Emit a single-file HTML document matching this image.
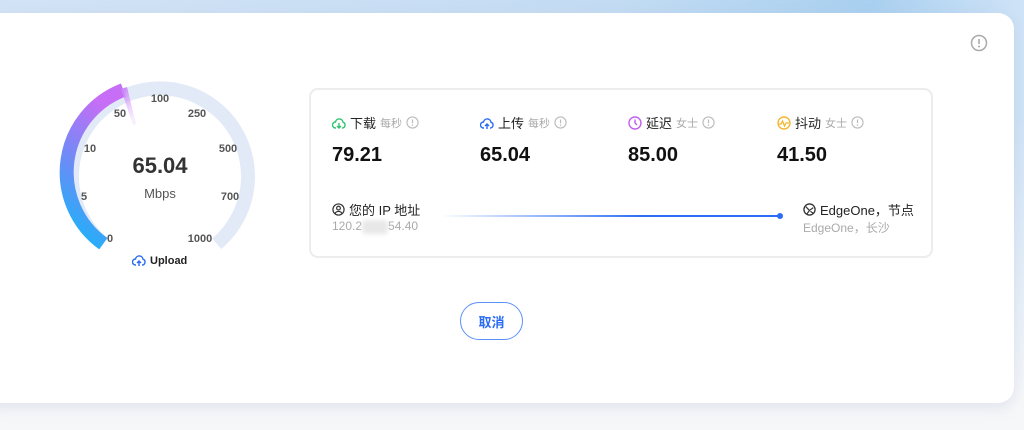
<!DOCTYPE html>
<html><head><meta charset="utf-8"><style>
*{margin:0;padding:0;box-sizing:border-box}
body{width:1024px;height:430px;overflow:hidden;background:#f6f7f9;font-family:"Liberation Sans","Noto Sans CJK SC",sans-serif;position:relative}
.bg{position:absolute;left:0;top:0;width:1024px;height:430px;background:linear-gradient(180deg,rgba(246,247,249,0) 0,rgba(246,247,249,0) 120px,#f6f7f9 400px),linear-gradient(90deg,#d3e3f6 0%,#c3dcf3 60%,#a9d0f0 85%,#cfe3f7 100%)}
.card{position:absolute;left:-20px;top:13px;width:1034px;height:390px;background:#fff;border-radius:16px;box-shadow:0 4px 14px rgba(180,190,215,.35)}
.abs{position:absolute}
.t{position:absolute;font-size:11px;font-weight:bold;color:#555;transform:translate(-50%,-50%)}
.panel{position:absolute;left:309px;top:88px;width:624px;height:170px;border:2px solid #ececee;border-radius:9px}
.lab{position:absolute;font-size:13px;color:#222;display:flex;align-items:center;gap:4px;white-space:nowrap}
.lab .s{font-size:11px;color:#aaa}
.val{position:absolute;font-size:20px;font-weight:bold;color:#111}
.sub{position:absolute;font-size:12px;color:#aaa;white-space:nowrap}
</style></head><body>
<div class="bg"></div>
<div class="card"></div>
<svg class="abs" style="left:970px;top:34px" width="18" height="18" viewBox="0 0 18 18"><circle cx="9" cy="9" r="7.5" fill="none" stroke="#aaa" stroke-width="1.5"/><path d="M9 5v5" stroke="#aaa" stroke-width="1.6"/><circle cx="9" cy="12.5" r="1" fill="#aaa"/></svg>

<svg class="abs" style="left:0;top:0" width="300" height="300" viewBox="0 0 300 300">
<defs><linearGradient id="g" x1="0" y1="1" x2="0.3" y2="0"><stop offset="0" stop-color="#12b8f9"/><stop offset="0.5" stop-color="#6b8cf6"/><stop offset="1" stop-color="#c66ef6"/></linearGradient>
<linearGradient id="n" x1="0" y1="0" x2="0.3" y2="1"><stop offset="0" stop-color="#c57af5"/><stop offset="1" stop-color="#e9c8fb" stop-opacity="0.3"/></linearGradient></defs>
<path d="M103.3 243.7 A88 88 0 1 1 216.7 243.7" fill="none" stroke="#e3eaf7" stroke-width="14"/>
<path d="M103.3 243.7 A88 88 0 0 1 123.4 90.0" fill="none" stroke="url(#g)" stroke-width="14"/>
<path d="M121 89 L127 87 L136 124 L133 125 Z" fill="url(#n)"/>
</svg>
<div class="t" style="left:110px;top:239px">0</div>
<div class="t" style="left:84px;top:197px">5</div>
<div class="t" style="left:90px;top:149px">10</div>
<div class="t" style="left:120px;top:114px">50</div>
<div class="t" style="left:160px;top:99px">100</div>
<div class="t" style="left:197px;top:114px">250</div>
<div class="t" style="left:228px;top:149px">500</div>
<div class="t" style="left:230px;top:197px">700</div>
<div class="t" style="left:200px;top:239px">1000</div>
<div class="abs" style="left:110px;top:153px;width:100px;text-align:center;font-size:22px;font-weight:bold;color:#333">65.04</div>
<div class="abs" style="left:110px;top:186px;width:100px;text-align:center;font-size:13px;color:#555">Mbps</div>
<div class="abs" style="left:132px;top:254px;display:flex;align-items:center;gap:4px;font-size:11px;font-weight:bold;color:#222">
<svg width="14" height="13" viewBox="0 0 14 13"><path d="M4 11H3.5A3 3 0 0 1 3.5 5 A3.8 3.8 0 0 1 11 5.2 A3 3 0 0 1 10.5 11H10" fill="none" stroke="#2a6cf6" stroke-width="1.4"/><path d="M7 12V7M5 9l2-2 2 2" fill="none" stroke="#2a6cf6" stroke-width="1.4"/></svg>Upload</div>

<div class="panel"></div>
<div class="lab" style="left:332px;top:113px"><svg width="14" height="14" viewBox="0 0 14 14"><path d="M4 12H3.5A3 3 0 0 1 3.5 6 A3.8 3.8 0 0 1 11 6.2 A3 3 0 0 1 10.5 12H10" fill="none" stroke="#2fc46f" stroke-width="1.4"/><path d="M7 7v5M5 10l2 2 2-2" fill="none" stroke="#2fc46f" stroke-width="1.4"/></svg>下载<span class="s">每秒</span><svg width="13" height="13" viewBox="0 0 14 14"><circle cx="7" cy="7" r="6" fill="none" stroke="#bbb" stroke-width="1.2"/><path d="M7 3.8v4" stroke="#bbb" stroke-width="1.3"/><circle cx="7" cy="10" r=".8" fill="#bbb"/></svg></div>
<div class="lab" style="left:480px;top:113px"><svg width="14" height="14" viewBox="0 0 14 14"><path d="M4 12H3.5A3 3 0 0 1 3.5 6 A3.8 3.8 0 0 1 11 6.2 A3 3 0 0 1 10.5 12H10" fill="none" stroke="#2a6cf6" stroke-width="1.4"/><path d="M7 13V8M5 10l2-2 2 2" fill="none" stroke="#2a6cf6" stroke-width="1.4"/></svg>上传<span class="s">每秒</span><svg width="13" height="13" viewBox="0 0 14 14"><circle cx="7" cy="7" r="6" fill="none" stroke="#bbb" stroke-width="1.2"/><path d="M7 3.8v4" stroke="#bbb" stroke-width="1.3"/><circle cx="7" cy="10" r=".8" fill="#bbb"/></svg></div>
<div class="lab" style="left:628px;top:113px"><svg width="14" height="14" viewBox="0 0 14 14"><circle cx="7" cy="7" r="6" fill="none" stroke="#c25ff0" stroke-width="1.4"/><path d="M7 3.5V7l2 2" fill="none" stroke="#c25ff0" stroke-width="1.4"/></svg>延迟<span class="s">女士</span><svg width="13" height="13" viewBox="0 0 14 14"><circle cx="7" cy="7" r="6" fill="none" stroke="#bbb" stroke-width="1.2"/><path d="M7 3.8v4" stroke="#bbb" stroke-width="1.3"/><circle cx="7" cy="10" r=".8" fill="#bbb"/></svg></div>
<div class="lab" style="left:777px;top:113px"><svg width="14" height="14" viewBox="0 0 14 14"><circle cx="7" cy="7" r="6" fill="none" stroke="#f5b730" stroke-width="1.4"/><path d="M1.5 8H4l1.5-3 2 5 1.5-3h3" fill="none" stroke="#f5b730" stroke-width="1.3"/></svg>抖动<span class="s">女士</span><svg width="13" height="13" viewBox="0 0 14 14"><circle cx="7" cy="7" r="6" fill="none" stroke="#bbb" stroke-width="1.2"/><path d="M7 3.8v4" stroke="#bbb" stroke-width="1.3"/><circle cx="7" cy="10" r=".8" fill="#bbb"/></svg></div>
<div class="val" style="left:332px;top:144px">79.21</div>
<div class="val" style="left:480px;top:144px">65.04</div>
<div class="val" style="left:628px;top:144px">85.00</div>
<div class="val" style="left:777px;top:144px">41.50</div>

<div class="lab" style="left:332px;top:200px"><svg width="13" height="13" viewBox="0 0 14 14"><circle cx="7" cy="7" r="6" fill="none" stroke="#333" stroke-width="1.3"/><circle cx="7" cy="5.5" r="2" fill="none" stroke="#333" stroke-width="1.3"/><path d="M3.2 11.5a4 3.5 0 0 1 7.6 0" fill="none" stroke="#333" stroke-width="1.3"/></svg>您的 IP 地址</div>
<div class="sub" style="left:332px;top:219px">120.2<span style="display:inline-block;width:26px;height:14px;background:#e8e8e8;border-radius:4px;vertical-align:middle;filter:blur(2px)"></span>54.40</div>
<div class="abs" style="left:440px;top:215px;width:340px;height:2px;background:linear-gradient(90deg,rgba(42,108,246,0),#2a6cf6 60%)"></div>
<div class="abs" style="left:777px;top:213px;width:6px;height:6px;border-radius:50%;background:#2a6cf6"></div>
<div class="lab" style="left:803px;top:200px"><svg width="13" height="13" viewBox="0 0 14 14"><circle cx="7" cy="7" r="6" fill="none" stroke="#333" stroke-width="1.4"/><path d="M3 4l4 4-3 4M7 8l4-3M8 9l3 2" fill="none" stroke="#333" stroke-width="1.3"/></svg>EdgeOne，节点</div>
<div class="sub" style="left:803px;top:219px">EdgeOne，长沙</div>

<div class="abs" style="left:460px;top:302px;width:63px;height:38px;border:1px solid #5d90f7;border-radius:19px;display:flex;align-items:center;justify-content:center;font-size:13px;font-weight:bold;color:#2a6cf6">取消</div>
</body></html>
